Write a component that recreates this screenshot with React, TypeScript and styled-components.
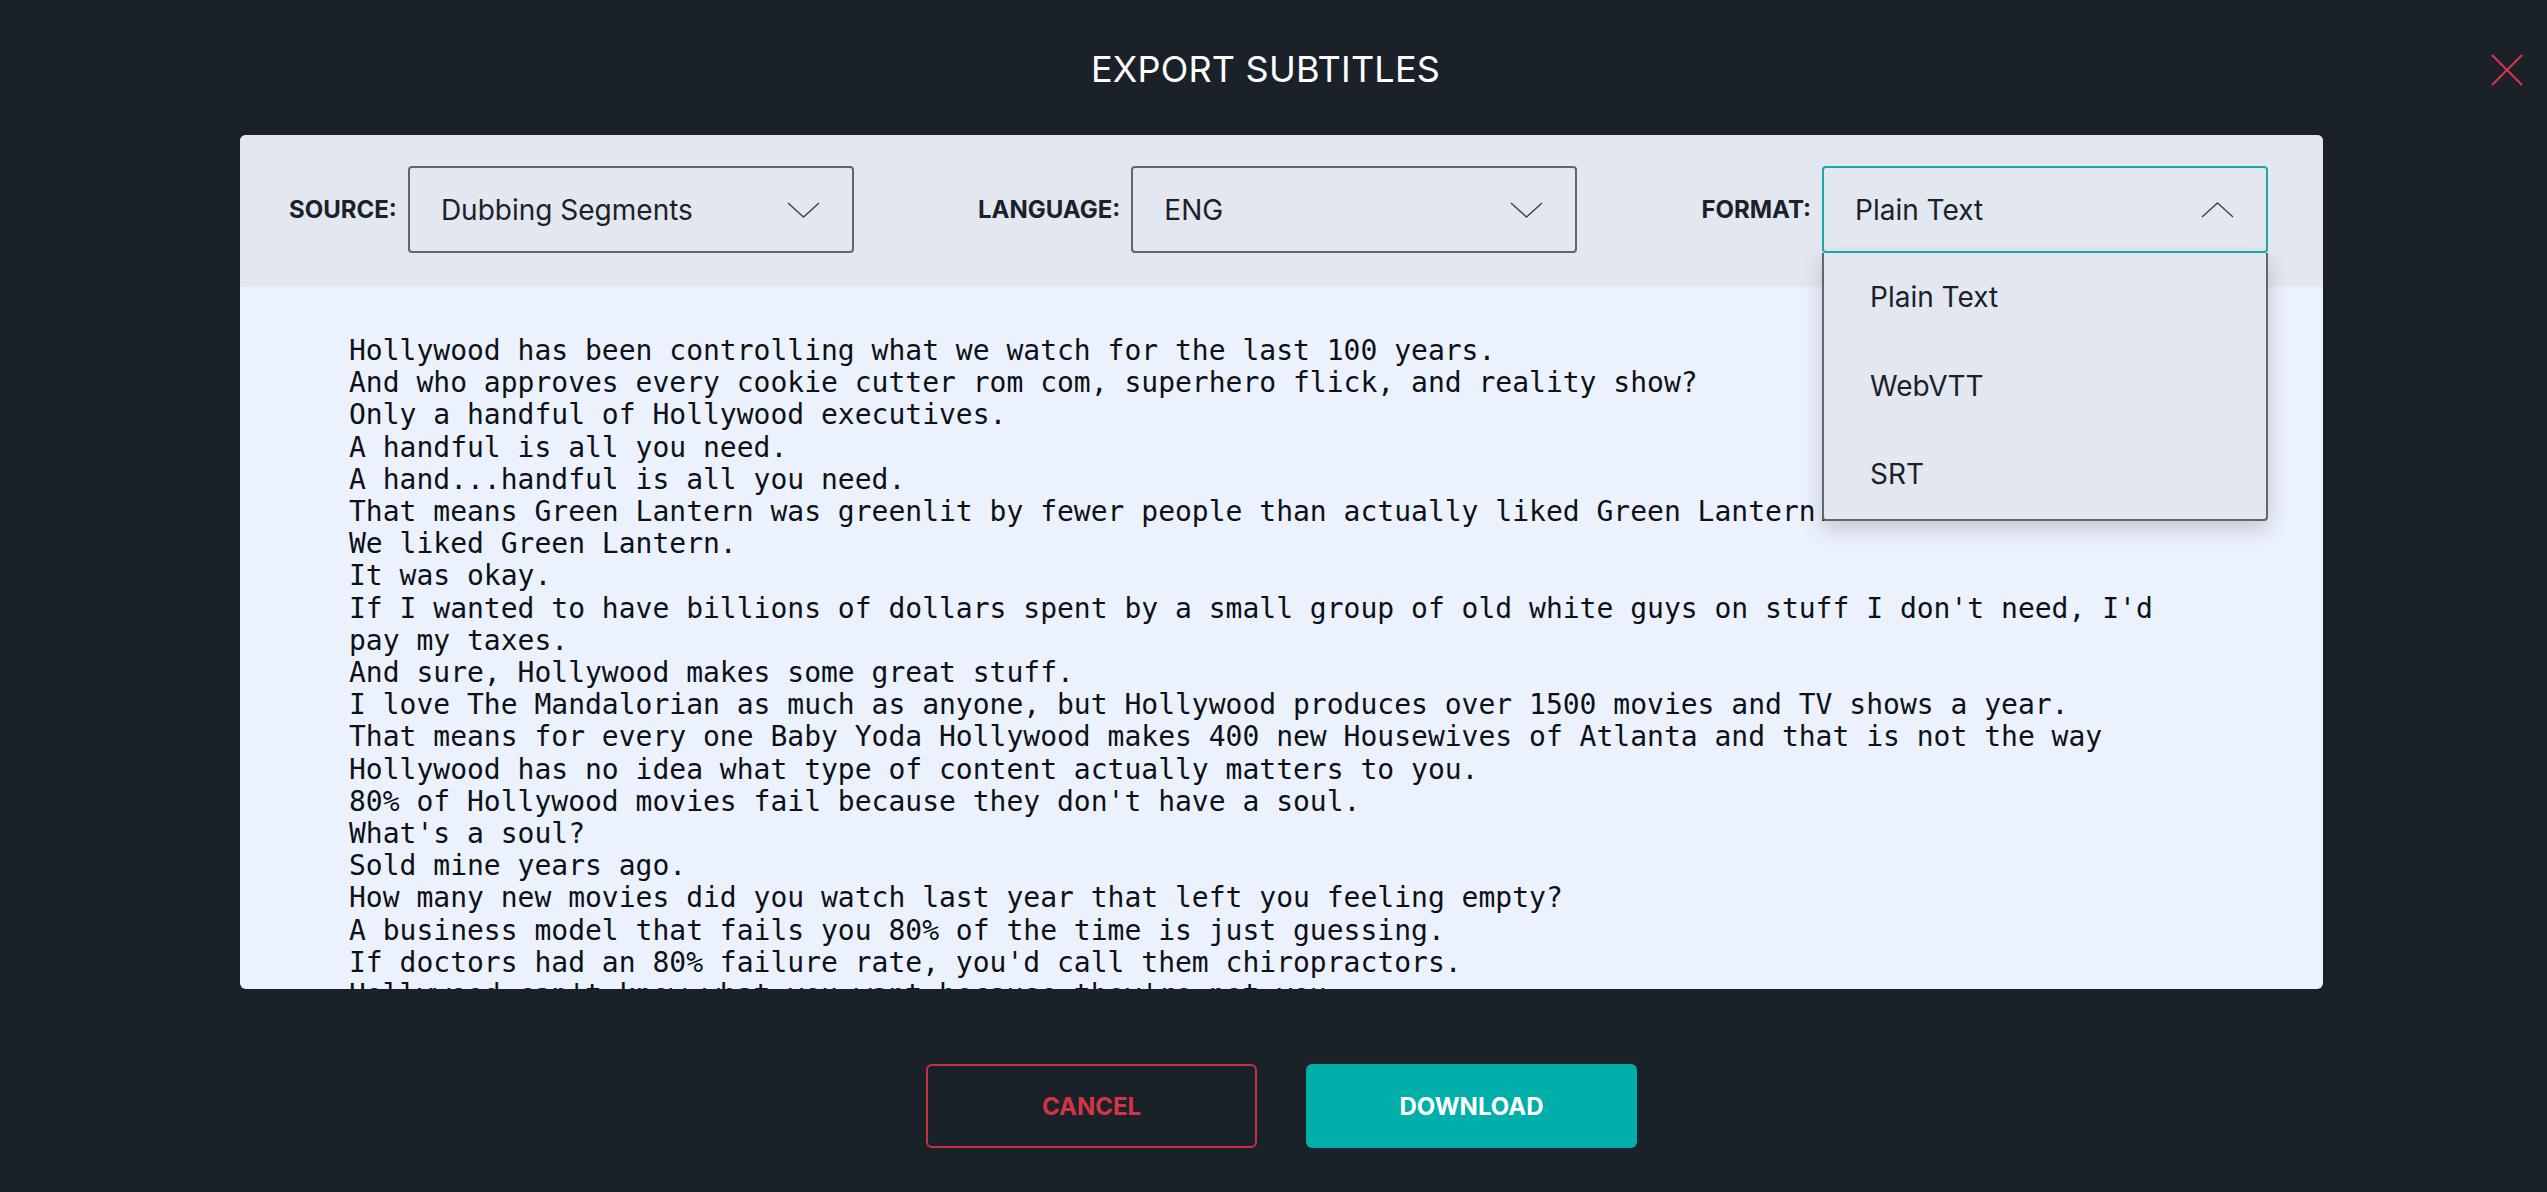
import styled, {createGlobalStyle} from "styled-components";

const GlobalStyle = createGlobalStyle`
    html, body {
        margin: 0;
        padding: 0;
        background: #1b2129;
    }
    * {
        box-sizing: border-box;
    }
`

const subtitleLines = [
    "Hollywood has been controlling what we watch for the last 100 years.",
    "And who approves every cookie cutter rom com, superhero flick, and reality show?",
    "Only a handful of Hollywood executives.",
    "A handful is all you need.",
    "A hand...handful is all you need.",
    "That means Green Lantern was greenlit by fewer people than actually liked Green Lantern.",
    "We liked Green Lantern.",
    "It was okay.",
    "If I wanted to have billions of dollars spent by a small group of old white guys on stuff I don't need, I'd pay my taxes.",
    "And sure, Hollywood makes some great stuff.",
    "I love The Mandalorian as much as anyone, but Hollywood produces over 1500 movies and TV shows a year.",
    "That means for every one Baby Yoda Hollywood makes 400 new Housewives of Atlanta and that is not the way",
    "Hollywood has no idea what type of content actually matters to you.",
    "80% of Hollywood movies fail because they don't have a soul.",
    "What's a soul?",
    "Sold mine years ago.",
    "How many new movies did you watch last year that left you feeling empty?",
    "A business model that fails you 80% of the time is just guessing.",
    "If doctors had an 80% failure rate, you'd call them chiropractors.",
    "Hollywood can't know what you want because they're not you.",
    "We are you.",
    "And we're taking back entertainment.",
];

const formats = ["Plain Text", "WebVTT", "SRT"];

type ChevronProps = {
    up?: boolean;
}
const Chevron = (props: ChevronProps) => (
    <svg width="33" height="16" viewBox="0 0 33 16" fill="none">
        <polyline
            points={props.up ? "1,15 16.5,1 32,15" : "1,1 16.5,15 32,1"}
            stroke="#3b4452"
            strokeWidth="1.4"
        />
    </svg>
);

type SelectPropsType = {
    label: string;
    value: string;
    open?: boolean;
    options?: string[];
}
const Select = (props: SelectPropsType) => {
    return (
        <Field>
            <Label>{props.label}</Label>
            <SelectWrap>
                <SelectBox $open={props.open}>
                    <span>{props.value}</span>
                    <Chevron up={props.open}/>
                </SelectBox>
                {props.open && props.options && (
                    <Menu>
                        {props.options.map(o => <MenuItem key={o}>{o}</MenuItem>)}
                    </Menu>
                )}
            </SelectWrap>
        </Field>
    );
};

export default function App() {
    return (
        <Page>
            <GlobalStyle/>
            <Header>
                <Title>EXPORT SUBTITLES</Title>
                <CloseButton aria-label="close">
                    <svg width="32" height="32" viewBox="0 0 32 32">
                        <path d="M1 1 L31 31 M31 1 L1 31" stroke="#d6374a" strokeWidth="2"/>
                    </svg>
                </CloseButton>
            </Header>
            <Body>
                <Panel>
                    <Toolbar>
                        <Select label="SOURCE:" value="Dubbing Segments"/>
                        <Select label="LANGUAGE:" value="ENG"/>
                        <Select label="FORMAT:" value="Plain Text" open options={formats}/>
                    </Toolbar>
                    <Preview>
                        <Pre>{subtitleLines.join("\n")}</Pre>
                    </Preview>
                </Panel>
                <Actions>
                    <CancelButton>Cancel</CancelButton>
                    <DownloadButton>Download</DownloadButton>
                </Actions>
            </Body>
        </Page>
    );
}

const Page = styled.div`
    width: 100%;
    height: 100vh;
    background: #1b2129;
    display: flex;
    flex-direction: column;
    font-family: Inter, "Liberation Sans", sans-serif;
    overflow: hidden;
`
const Header = styled.header`
    position: relative;
    height: 135px;
    display: flex;
    align-items: center;
    justify-content: center;
    padding: 2px 16px 0 0;
`
const Title = styled.h1`
    margin: 0;
    font-weight: 400;
    font-size: 36px;
    letter-spacing: 0.2px;
    color: #ffffff;
`
const CloseButton = styled.button`
    position: absolute;
    right: 24px;
    top: 54px;
    padding: 0;
    border: none;
    background: transparent;
    display: flex;
    cursor: pointer;
`
const Body = styled.main`
    display: flex;
    flex-direction: column;
    align-items: center;
    padding: 0 224px 0 240px;
`
const Panel = styled.section`
    width: 2083px;
    height: 854px;
    border-radius: 6px;
    background: #ecf2fd;
    display: flex;
    flex-direction: column;
`
const Toolbar = styled.div`
    position: relative;
    z-index: 2;
    height: 151px;
    flex-shrink: 0;
    display: flex;
    align-items: center;
    justify-content: space-between;
    padding: 0 55px 2px 49px;
    background: #e2e7f0;
    border-radius: 6px 6px 0 0;
    box-shadow: 0 1px 2px rgba(0, 0, 0, 0.04);
`
const Field = styled.div`
    display: flex;
    align-items: center;
    gap: 11px;
`
const Label = styled.span`
    font-weight: 700;
    font-size: 24px;
    color: #1b2129;
`
const SelectWrap = styled.div`
    position: relative;
`
const SelectBox = styled.div<{ $open?: boolean }>`
    width: 446px;
    height: 87px;
    display: flex;
    align-items: center;
    justify-content: space-between;
    padding: 0 32px 0 31px;
    border: 2px solid ${p => p.$open ? "#18aaa6" : "#5b6678"};
    border-radius: 4px;
    background: #e2e7f0;
    font-size: 28px;
    color: #1b2129;
`
const Menu = styled.ul`
    position: absolute;
    left: 0;
    right: 0;
    top: 100%;
    margin: 0;
    padding: 0;
    list-style: none;
    background: #e2e7f0;
    border: 2px solid #5f6670;
    border-top: none;
    border-radius: 0 0 4px 4px;
    box-shadow: 0 8px 22px rgba(0, 0, 0, 0.18);
`
const MenuItem = styled.li`
    height: 88.5px;
    display: flex;
    align-items: center;
    padding-left: 46px;
    font-size: 28px;
    color: #1b2129;
`
const Preview = styled.div`
    flex: 1;
    overflow: hidden;
    padding: 49px 134px 0 109px;
    border-radius: 0 0 6px 6px;
`
const Pre = styled.pre`
    margin: 0;
    white-space: pre-wrap;
    font-family: "DejaVu Sans Mono", "Liberation Mono", monospace;
    font-size: 28px;
    line-height: 32.2px;
    color: #0d1117;
`
const Actions = styled.div`
    display: flex;
    gap: 49px;
    margin-top: 75px;
`
const ActionButton = styled.button`
    width: 331px;
    height: 84px;
    border-radius: 6px;
    font-family: Inter, "Liberation Sans", sans-serif;
    font-weight: 700;
    font-size: 24px;
    text-transform: uppercase;
    cursor: pointer;
`
const CancelButton = styled(ActionButton)`
    background: transparent;
    border: 2px solid #c9303f;
    color: #d33544;
`
const DownloadButton = styled(ActionButton)`
    background: #00afa9;
    border: none;
    color: #ffffff;
`
